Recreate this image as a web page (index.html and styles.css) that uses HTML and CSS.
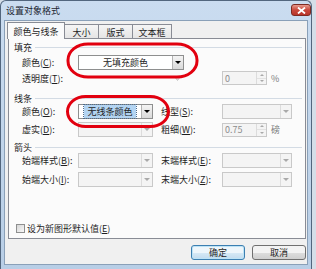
FILE: index.html
```html
<!DOCTYPE html>
<html lang="zh-CN">
<head>
  <meta charset="UTF-8">
  <meta name="viewport" content="width=device-width, initial-scale=1.0">
  <title>设置对象格式</title>
  <link rel="stylesheet" href="styles.css">
</head>
<body>
  <div class="window">
    <div class="titlebar">
      <span class="title">设置对象格式</span>
      <span class="close">
        <svg width="9" height="7" viewBox="0 0 9 7"><path d="M1 0.5 L8 6.5 M8 0.5 L1 6.5" stroke="#fff" stroke-width="1.8"/></svg>
      </span>
    </div>

    <div class="client">
      <div class="tabs">
        <div class="tab active">颜色与线条</div>
        <div class="tab">大小</div>
        <div class="tab">版式</div>
        <div class="tab">文本框</div>
      </div>

      <div class="panel">
        <div class="group-title">填充</div>
        <div class="row fill-row">
          <div class="col">
            <span class="lbl">颜色(<u>C</u>):</span>
            <div class="combo wide"><span class="value">无填充颜色</span><span class="drop"></span></div>
          </div>
        </div>
        <div class="row alpha-row">
          <span class="lbl">透明度(<u>T</u>):</span>
          <div class="slider">
            <svg width="7" height="5" viewBox="0 0 7 5"><path d="M0.5 0.5 H6.5 L3.5 4.5 Z" fill="#e2e2e2" stroke="#c4c4c4"/></svg>
          </div>
          <div class="spin"><span class="num">0</span><span class="arrows"><span class="up"></span><span class="down"></span></span></div>
          <span class="unit">%</span>
        </div>

        <div class="group-title gap-line">线条</div>
        <div class="row">
          <div class="col">
            <span class="lbl">颜色(<u>O</u>):</span>
            <div class="combo"><span class="value"><span class="selected">无线条颜色</span></span><span class="drop"></span></div>
          </div>
          <div class="col">
            <span class="lbl right">线型(<u>S</u>):</span>
            <div class="combo disabled"><span class="value"></span><span class="drop"></span></div>
          </div>
        </div>
        <div class="row gap-row">
          <div class="col">
            <span class="lbl">虚实(<u>D</u>):</span>
            <div class="combo disabled"><span class="value"></span><span class="drop"></span></div>
          </div>
          <div class="col">
            <span class="lbl right">粗细(<u>W</u>):</span>
            <div class="spin"><span class="num">0.75</span><span class="arrows"><span class="up"></span><span class="down"></span></span></div>
            <span class="unit">磅</span>
          </div>
        </div>

        <div class="group-title gap-arrow">箭头</div>
        <div class="row">
          <div class="col">
            <span class="lbl">始端样式(<u>B</u>):</span>
            <div class="combo disabled"><span class="value"></span><span class="drop"></span></div>
          </div>
          <div class="col">
            <span class="lbl right">末端样式(<u>E</u>):</span>
            <div class="combo disabled"><span class="value"></span><span class="drop"></span></div>
          </div>
        </div>
        <div class="row gap-row2">
          <div class="col">
            <span class="lbl">始端大小(<u>I</u>):</span>
            <div class="combo disabled"><span class="value"></span><span class="drop"></span></div>
          </div>
          <div class="col">
            <span class="lbl right">末端大小(<u>Z</u>):</span>
            <div class="combo disabled"><span class="value"></span><span class="drop"></span></div>
          </div>
        </div>

        <div class="check-row">
          <span class="check"></span>
          <span>设为新图形默认值(<u>E</u>)</span>
        </div>
      </div>

      <div class="buttons">
        <button class="btn default">确定</button>
        <button class="btn">取消</button>
      </div>
    </div>
  </div>

  <!-- hand-drawn red marks over the dialog -->
  <svg class="marks" width="316" height="269" viewBox="0 0 316 269">
    <rect x="68" y="44" width="129" height="33" rx="20" ry="16" fill="none" stroke="#e2000f" stroke-width="3"/>
    <rect x="67.5" y="96.5" width="101" height="30" rx="18" ry="15" fill="none" stroke="#e2000f" stroke-width="3"/>
  </svg>
</body>
</html>
```

FILE: styles.css
```css
* { box-sizing: border-box; }
body { margin: 0; background: #d5dee8; font-family: "Noto Sans CJK SC", "Noto Sans", sans-serif; font-size: 9px; color: #1e1e1e; }
u { text-decoration: underline; }

.window { position: relative; width: 312px; height: 269px; padding: 0 3px 4px; border: 1px solid #52667e; border-bottom: none; border-radius: 6px 6px 0 0; background: linear-gradient(to bottom, #cadcf0, #b8cee6); }
.titlebar { display: flex; justify-content: space-between; height: 19px; padding-left: 2px; }
.title { align-self: center; color: #1b2430; }
.close { display: flex; align-items: center; justify-content: center; width: 20px; height: 12px; margin: 3px -3px 0 0; border: 1px solid #7d2a22; border-radius: 3px; background: linear-gradient(to bottom, #e69a8e, #c9483c 50%, #b8342a); }

.client { height: 245px; border: 1px solid #8aa0b8; background: #f0f0f0; }

.tabs { display: flex; align-items: flex-end; height: 17px; margin: 1px 0 0 2px; }
.tab { display: flex; align-items: center; justify-content: center; height: 15px; border: 1px solid #898c95; border-bottom: none; margin-left: -1px; background: linear-gradient(to bottom, #f5f5f5, #e4e4e4); }
.tab:nth-child(2) { width: 35px; }
.tab:nth-child(3) { width: 35px; }
.tab:nth-child(4) { width: 40px; }
.tab.active { position: relative; z-index: 1; width: 58px; height: 17px; margin-left: 0; background: #fbfbfb; }

.panel { position: relative; width: 298px; height: 201px; margin: -1px 0 0 3px; border: 1px solid #898c95; background: #fbfbfb; }

.group-title { display: flex; align-items: center; gap: 3px; height: 12px; margin-top: 2px; padding: 0 3px 0 5px; }
.group-title::after { content: ""; flex: 1; height: 1px; background: #d3dbe4; }
.group-title.gap-line { margin-top: 7px; }
.group-title.gap-arrow { margin-top: 4px; }

.row { display: flex; align-items: center; gap: 8px; height: 15px; padding-left: 13px; }
.fill-row { margin-top: 2px; }
.alpha-row { gap: 0; height: 14px; margin-top: 1px; }
.gap-row { margin-top: 3px; }
.gap-row2 { margin-top: 4px; }
.col { display: flex; align-items: center; width: 131px; }
.fill-row .col { width: auto; }
.lbl { flex: none; width: 56px; white-space: nowrap; }
.lbl.right { width: 61px; }

.combo { display: flex; width: 75px; height: 15px; border: 1px solid #8e8f8f; background: #fff; }
.combo.wide { width: 106px; }
.combo .value { flex: 1; display: flex; align-items: center; justify-content: center; }
.combo .drop { display: flex; align-items: center; justify-content: center; width: 11px; border-left: 1px solid #b3b3b3; background: linear-gradient(to bottom, #f4f4f4, #d9d9d9); }
.combo .drop::after { content: ""; border-left: 3px solid transparent; border-right: 3px solid transparent; border-top: 3px solid #000; }
.combo .selected { padding: 0 3px; background: #b3d4f2; outline: 1px dotted #4d6c8c; }
.combo.disabled { border-color: #c9c9c9; background: #f4f4f4; }
.combo.disabled .drop { border-left-color: #dcdcdc; background: #f4f4f4; }
.combo.disabled .drop::after { border-top-color: #a9a9a9; }

.slider { display: flex; align-items: center; justify-content: flex-end; width: 144px; padding-right: 41px; }

.spin { display: flex; width: 45px; height: 14px; border: 1px solid #c9c9c9; background: #f4f4f4; color: #8c8c8c; }
.spin .num { flex: 1; display: flex; align-items: center; padding-left: 2px; }
.spin .arrows { display: flex; flex-direction: column; width: 10px; border-left: 1px solid #dcdcdc; }
.spin .up, .spin .down { flex: 1; display: flex; align-items: center; justify-content: center; }
.spin .up { border-bottom: 1px solid #e2e2e2; }
.spin .up::after { content: ""; border-left: 2px solid transparent; border-right: 2px solid transparent; border-bottom: 2px solid #a9a9a9; }
.spin .down::after { content: ""; border-left: 2px solid transparent; border-right: 2px solid transparent; border-top: 2px solid #a9a9a9; }
.unit { margin-left: 4px; color: #7a7a7a; }

.check-row { display: flex; align-items: center; gap: 2px; height: 12px; margin-top: 35px; padding-left: 7px; }
.check { width: 9px; height: 9px; border: 1px solid #8e8f8f; background: linear-gradient(135deg, #d6d6d6, #f8f8f8); }

.buttons { display: flex; justify-content: flex-end; gap: 7px; margin-top: 6px; padding-right: 1px; }
.btn { width: 54px; height: 15px; padding: 0; border: 1px solid #707070; border-radius: 3px; background: linear-gradient(to bottom, #f3f3f3 50%, #dedede 50%, #cfcfcf); font: inherit; color: #1e1e1e; }
.btn.default { border-color: #3c7fb1; background: linear-gradient(to bottom, #eef6fb 50%, #d7eaf6 50%, #c2dbee); box-shadow: inset 0 0 0 1px #bde3f6; }

.marks { position: absolute; top: 0; left: 0; pointer-events: none; }
```
